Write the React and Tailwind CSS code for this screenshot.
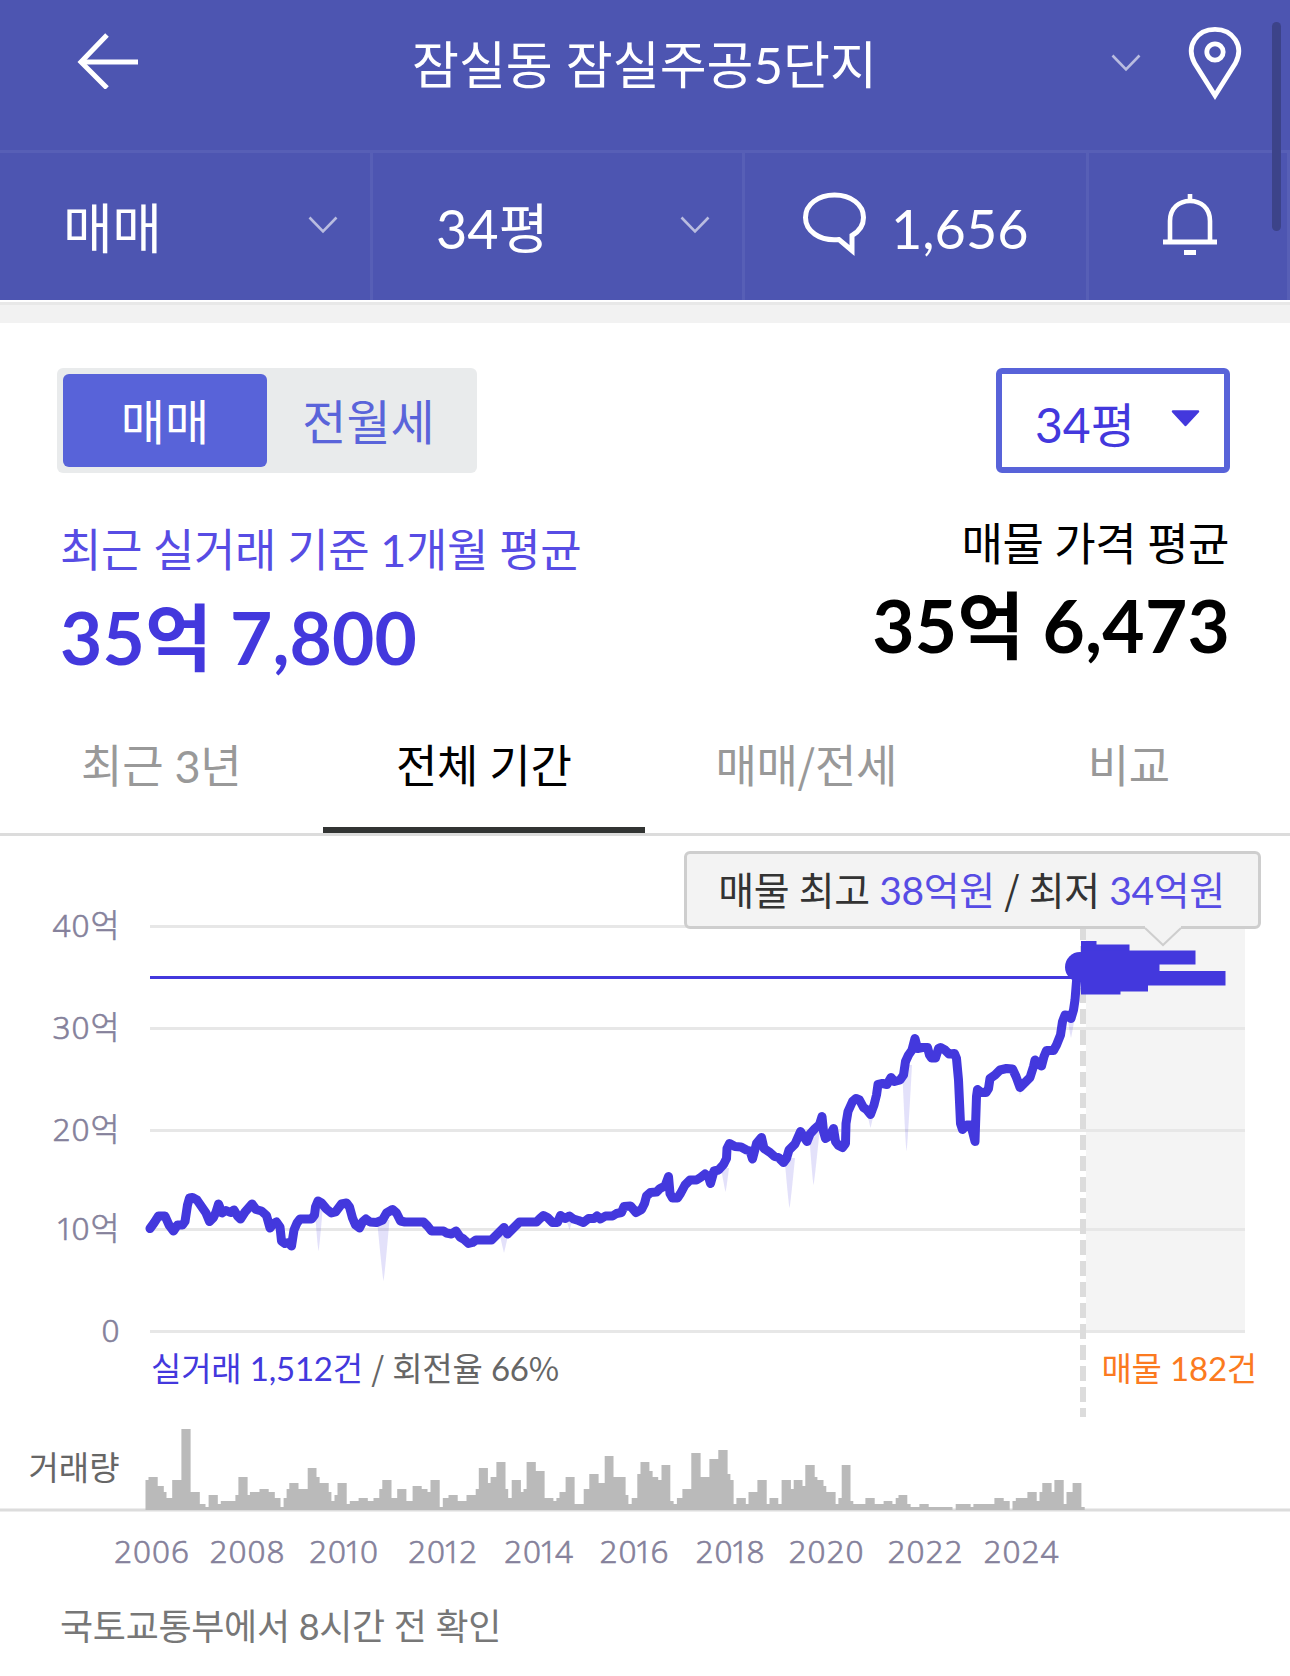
const GRID = [
    { label: '40억', y: 926.5 },
    { label: '30억', y: 1028.5 },
    { label: '20억', y: 1130.5 },
    { label: '10억', y: 1229.5 },
    { label: '0', y: 1331.5 },
];

const YEARS = [
    ['2006', 151.5], ['2008', 247], ['2010', 343.5], ['2012', 442.5], ['2014', 538.5],
    ['2016', 634], ['2018', 730], ['2020', 826], ['2022', 925], ['2024', 1021],
];

// Monthly average price, already in chart coordinates
const PRICE_LINE = `150,1228.5 154,1223 158.5,1216 165,1216 169,1225 173.5,1231 177.5,1225 182.5,1225 185,1221.5 187.5,1205 189.5,1198
192.5,1197.5 197,1200 201.5,1206.5 206,1213 209.5,1221.5 213.5,1217.5 216,1212 218.5,1204 222,1213 226,1210.5 230.5,1212.5 234,1210
237.5,1216 240.5,1219 245,1212 252,1204 256,1209.5 261.5,1211 266.5,1215.5 270,1228 273,1224 276.5,1222 280,1227 281.5,1241 285,1243.5
288.5,1242.5 291.5,1246 294,1230 297,1223 300,1219 306.5,1219 311.5,1219 314.5,1215 315.5,1207 318,1201 321.5,1203 326.5,1209
331.5,1213 335.5,1212 340,1206 341.5,1204 346.5,1203 349.5,1207 352.5,1218 355.5,1225 359.5,1228 362.5,1222 366,1219 370,1222
376.5,1222.5 382.5,1220 386.5,1213 392.5,1209.5 396.5,1213 400.5,1221 405,1222 423.5,1222 427.5,1226 431.5,1231 443.5,1231
446.5,1233 451.5,1234 456,1231 460,1237 463.5,1239 468.5,1243.5 472.5,1242.5 476,1240 491.5,1240 496.5,1235 504,1227.5 507.5,1234
511.5,1230 519.5,1222 536.5,1222 540,1218.5 543.5,1215.5 547.5,1217.5 552.5,1222.5 557.5,1222.5 560.5,1215.5 565,1218.5 569.5,1216
573.5,1219 578.5,1220.5 583.5,1222.5 588.5,1218.5 594,1218.5 597,1216 600.5,1219 605.5,1216 612.5,1216 616.5,1213.5 621.5,1212.5
624,1206.5 630.5,1206 636,1212.5 641.5,1209.5 644.5,1203.5 646.5,1196 650.5,1192.5 656.5,1192 660,1188.5 665,1186 668.5,1176.5
670,1193.5 672.5,1198 677.5,1198 680.5,1193.5 685,1185 690,1180 696.5,1180 700.5,1177.5 705,1174 708.5,1177 710.5,1183.5 714,1171
718.5,1170 723.5,1164.5 726.5,1158.5 727,1148.5 729.5,1143.5 735,1146.5 741,1147 746.5,1150 750,1151 752.5,1159 756.5,1143.5
761.5,1137.5 764,1148.5 770,1152.5 774.5,1156.5 778.5,1157.5 783.5,1162.5 786.5,1158.5 789,1150 795,1144 800.5,1131.5 803.5,1136.5
807,1141.5 810,1134 815,1128.5 819.5,1124.5 822,1116.5 823.5,1131.5 825.5,1138.5 829.5,1136 833.5,1128.5 835.5,1141.5 838.5,1145.5
842.5,1147.5 845.5,1143.5 846,1123.5 848,1111.5 852.5,1101.5 856,1098.5 859.5,1100 863.5,1107.5 866.5,1109.5 870.5,1114.5 874,1105
876.5,1095 878,1084.5 882.5,1083.5 887,1084.5 891,1077.5 894.5,1081.5 900,1080 903.5,1075 905.5,1061.5 908.5,1055 912,1050
915,1038.5 917.5,1048.5 922.5,1047.5 927.5,1047.5 929.5,1055 931.5,1058 935.5,1058 938.5,1048.5 940.5,1047.5 945,1050 949,1054
954.5,1053.5 956.5,1058.5 958.5,1080 960.5,1123.5 962.5,1129.5 966.5,1125 970.5,1125 972.5,1131.5 975,1141.5 976.5,1096.5
977.5,1089.5 981.5,1092.5 986,1092.5 988.5,1088.5 990,1078.5 995,1075 1000,1070 1006.5,1068.5 1012.5,1069 1016,1076.5 1020,1087.5
1025,1082.5 1030,1077.5 1033.5,1066.5 1035,1060 1037.5,1062.5 1041.5,1066 1044,1056.5 1046.5,1050.5 1053.5,1050.5 1056.5,1045
1060.5,1035 1062.5,1021.5 1065,1015 1068.5,1015.5 1071,1018.5 1073.5,1010 1075,1000 1077,975 1080,967`;

// Low outliers: left, right, top, tip x, tip y
const DIPS = [
    [314.5, 323, 1205, 318.5, 1251],
    [377, 389.5, 1220, 383.5, 1281],
    [500, 508, 1236, 504, 1253],
    [566, 573, 1220, 569.5, 1230],
    [721, 729, 1168, 725.5, 1192],
    [784.5, 795, 1158, 789.5, 1208],
    [809, 819.5, 1132, 813.5, 1185],
    [867.5, 873.5, 1115, 870.5, 1128],
    [902, 912, 1065, 906.5, 1151],
    [1017, 1023, 1088, 1020, 1095],
    [1067, 1075, 1016, 1071, 1038],
];

// Listings by price band: y, height, width
const LISTINGS = [
    [941, 4, 15.5], [944.5, 6, 48.5], [950.5, 13.5, 114.5], [964, 7, 78.5], [971, 14, 144.5], [985, 6, 67], [991, 3, 39.5],
];

// Trade volume steps: x where the step starts, height
const VOLUME = [
    [145.5, 30], [148.5, 33], [157.7, 24], [163.8, 18], [166.5, 12], [172.2, 30], [181.4, 81], [190.6, 18], [199.8, 6], [205.5, 3],
    [208.6, 15], [217.8, 6], [220.8, 9], [235.4, 15], [238.4, 33], [247.6, 15], [249.9, 18], [259.5, 21], [268.7, 18], [274.8, 12],
    [280.5, 3], [283.6, 12], [286.6, 21], [289.3, 27], [298.5, 21], [307.7, 42], [316.5, 33], [319.6, 27], [328.7, 18], [331.4, 9],
    [334.5, 15], [337.5, 27], [346.7, 6], [349.8, 9], [358.6, 12], [367.8, 9], [373.5, 12], [379.3, 21], [382.3, 30], [391.5, 12],
    [397.2, 21], [406.4, 9], [412.6, 24], [421.7, 21], [427.5, 18], [430.5, 30], [439.7, 3], [442.8, 12], [448.5, 15], [457.7, 9],
    [466.5, 15], [475.7, 21], [478.8, 42], [487.9, 27], [490.6, 33], [496.4, 48], [505.5, 21], [508.2, 12], [511.7, 30], [520.9, 18],
    [523.5, 21], [526.6, 48], [535.8, 39], [544.6, 12], [553.4, 9], [556.4, 12], [559.5, 18], [565.6, 33], [574.6, 6], [583.7, 21],
    [589.3, 36], [598.6, 27], [604.7, 54], [613.5, 33], [625.6, 15], [628.4, 6], [631.7, 12], [637.3, 36], [640.5, 48], [649.4, 39],
    [652.6, 33], [658.2, 30], [661.5, 45], [670.3, 9], [673.6, 6], [676.9, 12], [682.4, 21], [691.3, 57], [700.6, 33], [709.4, 51],
    [718.3, 60], [727.6, 36], [730.4, 30], [733.6, 6], [736.4, 12], [745.8, 6], [748.5, 18], [757.4, 30], [766.7, 6], [769.5, 12],
    [778.3, 6], [781.6, 30], [790.9, 21], [793.7, 30], [802.5, 24], [805.3, 45], [814.7, 33], [817.4, 30], [823.5, 24], [826.3, 18],
    [835.6, 6], [838.4, 12], [841.7, 45], [850.5, 9], [853.3, 6], [865.4, 12], [874.7, 6], [883.6, 9], [892.4, 6], [895.7, 12],
    [898.5, 15], [907.3, 6], [910.6, 3], [919.4, 6], [928.7, 3], [952.5, 0], [955.7, 6], [970.6, 3], [973.4, 6], [994.4, 12],
    [1003.7, 9], [1009.7, 0], [1012.5, 9], [1015.8, 12], [1027.4, 18], [1036.7, 9], [1039.5, 18], [1042.3, 27], [1051.6, 18],
    [1054.4, 30], [1063.7, 6], [1066.5, 18], [1072.6, 27], [1081.4, 3], [1084.7, 0],
];

const volumePath = `M145.5 1510 ${VOLUME.map(([x, h]) => `H${x} V${1510 - h}`).join(' ')} Z`;

const Chevron = () => (
    <svg width="30" height="18" viewBox="0 0 30 18" fill="none" stroke="#b9bce0" strokeWidth="2.6" className="-mt-[3px]">
        <path d="M1.5 1.5 L15 15.5 L28.5 1.5" />
    </svg>
);

// Latin punctuation that should follow the Korean face
const Kr = ({ children }) => <span className="font-['Noto_Sans_CJK_KR'] leading-none">{children}</span>;

// Axis label; the figure one is set tighter than the others
const AxisText = ({ children, ...props }) => (
    <text fontSize="31.5" fill="#85819b" stroke="#85819b" strokeWidth="0.6" className="font-['Noto_Sans','Noto_Sans_CJK_KR',sans-serif] font-light" {...props}>
        {[...children].map((c, i, all) => (
            <tspan key={i} letterSpacing={c === '1' || all[i + 1] === '1' ? -1.9 : 1}>{c}</tspan>
        ))}
    </text>
);

const Header = () => (
    <header className="relative bg-[#4d55b1] text-white">
        <div className="flex h-[153px] items-center border-b-3 border-[#575fb6] pb-[21px] pl-[77px] pr-[48px]">
            <svg width="62" height="56" viewBox="0 0 62 56" fill="none" stroke="currentColor" strokeWidth="5" className="-mt-2">
                <path d="M30 2 L4 29 L30 55" />
                <path d="M4 29 H61" />
            </svg>
            <h1 className="ml-[273px] mr-auto text-[51px] leading-none">잠실동 잠실주공5단지</h1>
            <div className="flex items-center gap-[47px]">
                <Chevron />
                <svg width="54" height="74" viewBox="0 0 54 74" fill="none" stroke="currentColor" strokeWidth="4.8" className="-mt-[4px]">
                    <path d="M27 69.5 L6.5 37 C-2.5 20 9 3.4 27 3.4 C45 3.4 56.5 20 47.5 37 Z" />
                    <circle cx="27" cy="26" r="8.2" />
                </svg>
            </div>
        </div>
        <div className="flex h-[147px] text-[54px]">
            <div className="flex w-[373px] items-center justify-between border-r-3 border-[#575fb6] pl-[63px] pr-[32px]">
                <span className="pt-1 tracking-[-0.5px]">매매</span>
                <Chevron />
            </div>
            <div className="flex w-[372px] items-center justify-between border-r-3 border-[#575fb6] pl-[63px] pr-[32px]">
                <span className="pt-1">34평</span>
                <Chevron />
            </div>
            <div className="flex w-[344px] items-center border-r-3 border-[#575fb6] pl-[57px]">
                <svg width="66" height="64" viewBox="0 0 66 64" fill="none" stroke="currentColor" strokeWidth="5" className="-mt-[5px]">
                    <path d="M37 47.5 C17 49.5 3.5 38.5 3.5 25.5 C3.5 12.500 16 3 32.5 3 C49 3 61.5 12.5 61.5 25.5 C61.5 33 57 39.5 50 43.5 V58.5 Z" />
                </svg>
                <span className="pl-[23px] pt-1">1,656</span>
            </div>
            <div className="flex flex-1 items-center border-r-3 border-[#575fb6] pl-[73px]">
                <svg width="56" height="62" viewBox="0 0 56 62" fill="none" stroke="currentColor" strokeWidth="4.6" className="-mt-[4px]">
                    <path d="M28 0 V7" />
                    <path d="M8 48 V27 C8 14 17 7 28 7 C39 7 48 14 48 27 V48" />
                    <path d="M1 48 H55" strokeWidth="5" />
                    <path d="M22 58.5 H34" strokeWidth="5" />
                </svg>
            </div>
        </div>
        <div className="absolute right-[9px] top-[22px] h-[209px] w-[9px] rounded-full bg-[#3c4389]" />
    </header>
);

const Controls = () => (
    <div className="flex justify-between pl-[57px] pr-[60px] pt-[45px]">
        <div className="flex h-[105px] w-[420px] rounded-md bg-[#e9ebec] p-[6px] text-[48px]">
            <button className="w-[204px] rounded-md bg-[#5863d9] pt-[2px] leading-none text-white">매매</button>
            <button className="flex-1 pt-[2px] pr-[1px] leading-none text-[#5a64da]">전월세</button>
        </div>
        <button className="flex h-[105px] w-[234px] items-center rounded-md border-6 border-[#5863d9] pl-[33px] text-[48px] leading-none text-[#4338dd]">
            <span className="pt-[8px]">34평</span>
            <svg width="29" height="17" viewBox="0 0 29 17" className="-mt-1 ml-auto mr-[24px]">
                <path d="M2 1.5 H27 L14.5 15 Z" fill="currentColor" stroke="currentColor" strokeWidth="2.5" strokeLinejoin="round" />
            </svg>
        </button>
    </div>
);

const Summary = () => (
    <div className="flex h-[223px] justify-between pl-[60px] pr-[60px]">
        <div className="pt-[44px] text-[#4338dd]">
            <p className="text-[45px] leading-[66px] tracking-[-0.4px] text-[#574ce4]">최근 실거래 기준 1개월 평균</p>
            <p className="mt-[12px] text-[73px] font-bold leading-[84px] tracking-[0.1px]">35억 7,800</p>
        </div>
        <div className="pt-[38px] text-right text-black">
            <p className="pr-[1px] text-[45px] leading-[66px] tracking-[-0.5px]">매물 가격 평균</p>
            <p className="mt-[6px] text-[73px] font-bold leading-[84px] tracking-[0.2px]">35억 6,473</p>
        </div>
    </div>
);

const Tabs = () => (
    <nav className="grid h-[140px] grid-cols-4 border-b-3 border-[#dcdcdc] text-center text-[45px] tracking-[-0.3px] text-[#999]">
        {['최근 3년', '전체 기간', <>매매<Kr>/</Kr>전세</>, '비교'].map((tab, i) => (
            <div key={i} className={`h-[137px] border-b-6 pt-[9px] leading-[122px] ${i === 1 ? 'border-[#323433] text-black' : 'border-transparent'}`}>
                {tab}
            </div>
        ))}
    </nav>
);

const PriceChart = () => (
    <div className="relative">
        <svg width="1290" height="504" viewBox="0 836 1290 504" className="block overflow-visible">
            <rect x="1086" y="900" width="159" height="431" fill="#f4f4f4" />
            {GRID.map(({ label, y }) => (
                <g key={label}>
                    <path d={`M150 ${y} H1245`} stroke="#e7e7e7" strokeWidth="3" />
                    <AxisText x="120.5" y={y + 10} textAnchor="end">{label}</AxisText>
                </g>
            ))}
            <path d="M1083 925 V1417" stroke="#dcdcdc" strokeWidth="6" strokeDasharray="15 6" />
            {DIPS.map(([l, r, top, x, y]) => (
                <path key={x} d={`M${l} ${top} Q${x - 1} ${y - 4} ${x} ${y} Q${x + 1} ${y - 4} ${r} ${top} Z`} fill="#4338dd" fillOpacity="0.15" />
            ))}
            <path d="M150 977.5 H1083" stroke="#4338dd" strokeWidth="3" />
            <polyline points={PRICE_LINE} fill="none" stroke="#4338dd" strokeWidth="9" strokeLinecap="round" strokeLinejoin="round" />
            <circle cx="1080" cy="967" r="15" fill="#4338dd" />
            {LISTINGS.map(([y, h, w]) => <rect key={y} x="1081" y={y} width={w} height={h + 0.5} fill="#4338dd" />)}
        </svg>
        <div className="absolute left-[684px] top-[15px] flex h-[78px] w-[577px] items-center justify-center rounded-md border-3 border-[#cecece] bg-[#f3f3f3] pr-[2px] text-[39px] text-[#333]">
            <p className="whitespace-pre tracking-[-0.4px]">매물 최고 <span className="text-[#574ce4]">38억원</span> <Kr>/</Kr> 최저 <span className="text-[#574ce4]">34억원</span></p>
            <svg width="38" height="22" viewBox="0 0 38 22" className="absolute left-[457px] top-[71px]">
                <path d="M1 1 V3 L19 20 L37 3 V1 Z" fill="#f3f3f3" />
                <path d="M1 3 L19 20 L37 3" fill="none" stroke="#cecece" strokeWidth="2" />
            </svg>
        </div>
    </div>
);

const VolumeChart = () => (
    <svg width="1290" height="194" viewBox="0 1396 1290 194" className="block">
        <text x="119.5" y="1479.5" textAnchor="end" fontSize="33" fill="#666">거래량</text>
        <path d="M0 1510 H1290" stroke="#dcdcdc" strokeWidth="3" />
        <path d={volumePath} fill="#bababa" />
        {YEARS.map(([year, x]) => <AxisText key={year} x={x + 0.5} y="1562.5" textAnchor="middle">{year}</AxisText>)}
    </svg>
);

export default function App() {
    return (
        <main className="h-[1676px] w-[1290px] overflow-hidden bg-white font-['Lato','Noto_Sans_CJK_KR',sans-serif]">
            <Header />
            <div className="mt-[2px] h-[21px] border-t-3 border-[#e8e8e8] bg-[#f2f2f2]" />
            <Controls />
            <Summary />
            <Tabs />
            <PriceChart />
            <div className="flex h-[56px] items-center justify-between pl-[151px] pr-[33px] pt-[2px] text-[33px] tracking-[-0.2px] text-[#666]">
                <p><span className="text-[#4338dd]">실거래 1,512건</span> <Kr>/</Kr> 회전율 66<Kr>%</Kr></p>
                <p className="text-[#fb7a20]">매물 182건</p>
            </div>
            <VolumeChart />
            <p className="pl-[60px] text-[36px] leading-[72px] tracking-[-0.3px] text-[#777]">국토교통부에서 8시간 전 확인</p>
        </main>
    );
}
